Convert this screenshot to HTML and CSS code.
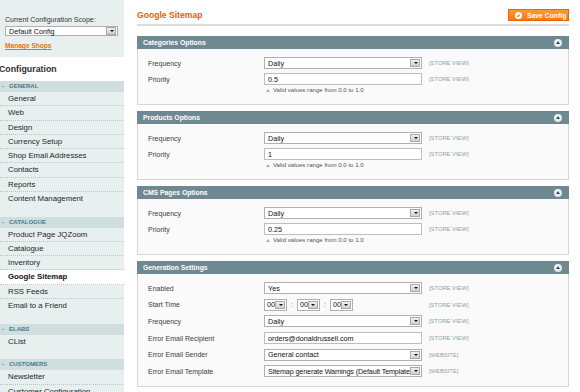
FILE: index.html
```html
<!DOCTYPE html>
<html lang="en">
<head>
  <meta charset="UTF-8" />
  <title>Google Sitemap - Configuration</title>
  <link rel="stylesheet" href="styles.css">
</head>
<body>
  <div class="page">

    <!-- left column: scope switcher and config tabs -->
    <aside class="side">
      <div class="scope">
        <div class="scope-label">Current Configuration Scope:</div>
        <div class="select scope-select"><span>Default Config</span><i class="arrow"></i></div>
        <a class="manage" href="#">Manage Shops</a>
      </div>
      <h3 class="side-title">Configuration</h3>

      <dl class="tabs">
        <dt>GENERAL</dt>
        <dd>General</dd>
        <dd>Web</dd>
        <dd>Design</dd>
        <dd>Currency Setup</dd>
        <dd>Shop Email Addresses</dd>
        <dd>Contacts</dd>
        <dd>Reports</dd>
        <dd class="last">Content Management</dd>

        <dt>CATALOGUE</dt>
        <dd>Product Page JQZoom</dd>
        <dd>Catalogue</dd>
        <dd>Inventory</dd>
        <dd class="active">Google Sitemap</dd>
        <dd>RSS Feeds</dd>
        <dd class="last">Email to a Friend</dd>

        <dt>ELABS</dt>
        <dd class="last">CList</dd>

        <dt>CUSTOMERS</dt>
        <dd>Newsletter</dd>
        <dd class="last">Customer Configuration</dd>
      </dl>
    </aside>

    <main class="main">
      <div class="head">
        <h3>Google Sitemap</h3>
        <button class="save">
          <svg width="7" height="7" viewBox="0 0 8 8"><circle cx="4" cy="4" r="4" fill="#fff"/><path d="M2.2 4.1 L3.5 5.4 L5.9 2.7" fill="none" stroke="#f08a1c" stroke-width="1.3"/></svg>
          Save Config
        </button>
      </div>
      <div class="rule"></div>

      <section class="box">
        <div class="box-head">Categories Options<span class="toggle"></span></div>
        <div class="box-body">
          <div class="row">
            <div class="label">Frequency</div>
            <div class="select ctl"><span>Daily</span><i class="arrow"></i></div>
            <div class="scope-tag">[STORE VIEW]</div>
          </div>
          <div class="row has-hint">
            <div class="label">Priority</div>
            <div class="input ctl">0.5</div>
            <div class="scope-tag">[STORE VIEW]</div>
          </div>
          <div class="hint"><b></b>Valid values range from 0.0 to 1.0</div>
        </div>
      </section>

      <section class="box">
        <div class="box-head">Products Options<span class="toggle"></span></div>
        <div class="box-body">
          <div class="row">
            <div class="label">Frequency</div>
            <div class="select ctl"><span>Daily</span><i class="arrow"></i></div>
            <div class="scope-tag">[STORE VIEW]</div>
          </div>
          <div class="row has-hint">
            <div class="label">Priority</div>
            <div class="input ctl">1</div>
            <div class="scope-tag">[STORE VIEW]</div>
          </div>
          <div class="hint"><b></b>Valid values range from 0.0 to 1.0</div>
        </div>
      </section>

      <section class="box">
        <div class="box-head">CMS Pages Options<span class="toggle"></span></div>
        <div class="box-body">
          <div class="row">
            <div class="label">Frequency</div>
            <div class="select ctl"><span>Daily</span><i class="arrow"></i></div>
            <div class="scope-tag">[STORE VIEW]</div>
          </div>
          <div class="row has-hint">
            <div class="label">Priority</div>
            <div class="input ctl">0.25</div>
            <div class="scope-tag">[STORE VIEW]</div>
          </div>
          <div class="hint"><b></b>Valid values range from 0.0 to 1.0</div>
        </div>
      </section>

      <section class="box gen">
        <div class="box-head">Generation Settings<span class="toggle"></span></div>
        <div class="box-body">
          <div class="row">
            <div class="label">Enabled</div>
            <div class="select ctl"><span>Yes</span><i class="arrow"></i></div>
            <div class="scope-tag">[STORE VIEW]</div>
          </div>
          <div class="row">
            <div class="label">Start Time</div>
            <div class="time ctl">
              <div class="select small"><span>00</span><i class="arrow"></i></div>
              <span class="colon">:</span>
              <div class="select small"><span>00</span><i class="arrow"></i></div>
              <span class="colon">:</span>
              <div class="select small"><span>00</span><i class="arrow"></i></div>
            </div>
            <div class="scope-tag">[STORE VIEW]</div>
          </div>
          <div class="row">
            <div class="label">Frequency</div>
            <div class="select ctl"><span>Daily</span><i class="arrow"></i></div>
            <div class="scope-tag">[STORE VIEW]</div>
          </div>
          <div class="row">
            <div class="label">Error Email Recipient</div>
            <div class="input ctl">orders@donaldrussell.com</div>
            <div class="scope-tag">[STORE VIEW]</div>
          </div>
          <div class="row">
            <div class="label">Error Email Sender</div>
            <div class="select ctl"><span>General contact</span><i class="arrow"></i></div>
            <div class="scope-tag">[WEBSITE]</div>
          </div>
          <div class="row">
            <div class="label">Error Email Template</div>
            <div class="select ctl tight"><span>Sitemap generate Warnings (Default Template</span><i class="arrow"></i></div>
            <div class="scope-tag">[WEBSITE]</div>
          </div>
        </div>
      </section>
    </main>
  </div>
</body>
</html>
```

FILE: styles.css
```css
* {
  box-sizing: border-box;
}

body {
  margin: 0;
  font-family: "Liberation Sans", Arial, sans-serif;
  background-color: #fff;
  color: #2f2f2f;
  overflow: hidden;
}

.page {
  display: flex;
  align-items: flex-start;
}

/* ---- sidebar ---- */

.side {
  width: 124px;
  flex: none;
  background-color: #e7efef;
  min-height: 392px;
}

.scope {
  padding: 15px 6px 6px 5px;
}

.scope-label {
  font-size: 7px;
  line-height: 10px;
  color: #333;
}

.scope-select {
  margin-top: 1px;
  height: 10px;
  font-size: 7px;
}

.manage {
  display: block;
  margin-top: 5px;
  font-size: 6.6px;
  line-height: 10px;
  font-weight: bold;
  color: #ea7601;
}

.side-title {
  margin: 0;
  height: 24px;
  line-height: 24px;
  background-color: #fff;
  font-size: 8.8px;
  font-weight: bold;
  color: #2f2f2f;
  text-indent: -1px;
}

.tabs {
  margin: 0;
}

.tabs dt {
  height: 11px;
  line-height: 11px;
  background-color: #d1dedf;
  font-size: 6px;
  font-weight: bold;
  color: #3f7a89;
  padding-left: 9px;
  position: relative;
  margin-top: 10.5px;
}

.tabs dt:first-child {
  margin-top: 0;
}

.tabs dt::before {
  content: "";
  position: absolute;
  left: 2px;
  top: 5px;
  width: 2px;
  height: 1px;
  background-color: #8aa4aa;
}

.tabs dd {
  margin: 0;
  height: 14.25px;
  line-height: 13px;
  padding-left: 8px;
  font-size: 7.8px;
  color: #262626;
  border-bottom: 1px dotted #b9c6c7;
}

.tabs dd.last {
  border-bottom: none;
}

.tabs dd.active {
  background-color: #fff;
  font-weight: bold;
  color: #111;
}

/* ---- main column ---- */

.main {
  flex: 1;
  padding: 9px 11px 0 13px;
}

.head {
  display: flex;
  justify-content: space-between;
  align-items: center;
  height: 12px;
  margin-bottom: 3px;
}

.head h3 {
  margin: 0;
  font-size: 8.6px;
  line-height: 12px;
  font-weight: bold;
  color: #eb5e00;
}

.save {
  display: flex;
  align-items: center;
  gap: 5px;
  width: 61px;
  height: 12px;
  padding: 0 0 0 6px;
  border: 1px solid #ed6502;
  background: linear-gradient(#fb9a33, #f27b0b);
  color: #fff;
  font-family: inherit;
  font-size: 6.8px;
  font-weight: bold;
  white-space: nowrap;
}

.rule {
  height: 2px;
  background-color: #dcdcdc;
  margin-bottom: 10px;
}

.box {
  margin-bottom: 6px;
}

.box-head {
  display: flex;
  justify-content: space-between;
  align-items: center;
  height: 13px;
  padding: 0 7px 0 6px;
  background-color: #6f8992;
  color: #fff;
  font-size: 6.8px;
  font-weight: bold;
}

.toggle {
  width: 8px;
  height: 8px;
  border-radius: 50%;
  background: radial-gradient(circle at 40% 35%, #fff, #cfd9dc);
  position: relative;
}

.toggle::after {
  content: "";
  position: absolute;
  left: 2px;
  top: 2.5px;
  border-left: 2px solid transparent;
  border-right: 2px solid transparent;
  border-bottom: 3px solid #34474e;
}

.box-body {
  background-color: #fafafa;
  border: 1px solid #d6d6d6;
  border-top: none;
  padding: 8px 0 9px 10px;
}

.row {
  display: flex;
  align-items: center;
  height: 12px;
  margin-bottom: 4px;
}

.gen .row {
  margin-bottom: 4.7px;
}

.row:last-child,
.row.has-hint {
  margin-bottom: 0;
}

.label {
  width: 116px;
  flex: none;
  font-size: 7px;
  color: #3c3c3c;
}

.ctl {
  width: 158px;
  height: 12px;
  flex: none;
}

.scope-tag {
  margin-left: 7px;
  font-size: 5.8px;
  color: #8fa2aa;
}

.select {
  display: flex;
  align-items: center;
  border: 1px solid #b0b0b0;
  background-color: #fff;
  padding-left: 3px;
  font-size: 7.2px;
  color: #111;
}

.select span {
  flex: 1;
  overflow: hidden;
  white-space: nowrap;
}

.select.tight span {
  letter-spacing: -0.12px;
}

.arrow {
  flex: none;
  width: 10px;
  height: 8px;
  margin-right: 1px;
  border: 1px solid #a9a9a9;
  background: linear-gradient(#f0f0f0, #cfcfcf);
  position: relative;
}

.arrow::after {
  content: "";
  position: absolute;
  left: 2.5px;
  top: 2px;
  border-left: 2px solid transparent;
  border-right: 2px solid transparent;
  border-top: 2.5px solid #111;
}

.input {
  display: flex;
  align-items: center;
  border: 1px solid #bdbdbd;
  background-color: #fff;
  padding-left: 3px;
  font-size: 7.2px;
  color: #111;
}

.time {
  display: flex;
  align-items: center;
  gap: 3px;
}

.select.small {
  width: 23px;
  height: 12px;
  padding-left: 2px;
}

.colon {
  font-size: 7px;
  color: #777;
  padding: 0 1px;
}

.hint {
  margin-left: 116px;
  padding-left: 2px;
  height: 10px;
  line-height: 10px;
  font-size: 6.1px;
  color: #555;
}

.hint b {
  display: inline-block;
  margin-right: 3px;
  border-left: 2px solid transparent;
  border-right: 2px solid transparent;
  border-bottom: 3px solid #aaa;
}
```
